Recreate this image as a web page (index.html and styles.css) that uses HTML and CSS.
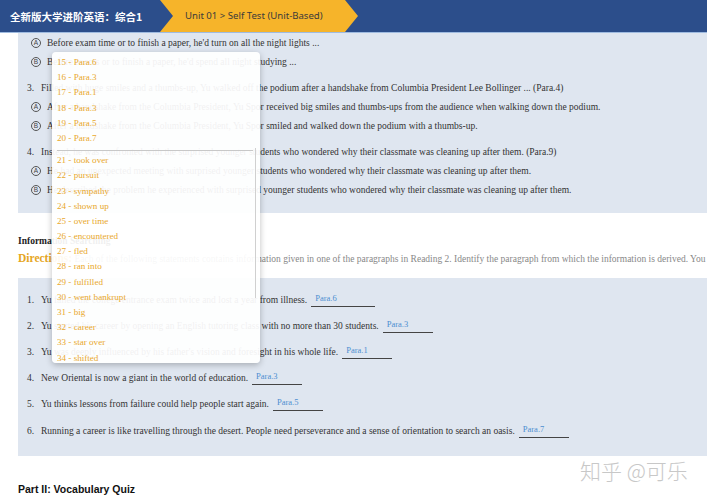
FILE: index.html
```html
<!DOCTYPE html>
<html lang="zh-CN">
<head>
    <meta charset="UTF-8">
    <meta name="viewport" content="width=device-width, initial-scale=1.0">
    <title>Self Test (Unit-Based)</title>
    <link rel="stylesheet" href="styles.css">
</head>
<body>
    <div class="topbar">
        <div class="course">全新版大学进阶英语：综合1</div>
        <div class="crumb">Unit 01 &gt; Self Test (Unit-Based)</div>
    </div>

    <div class="page">
        <!-- 阅读题 -->
        <div class="panel panel-choice">
            <div class="option"><span class="mark">A</span>Before exam time or to finish a paper, he'd turn on all the night lights ...</div>
            <div class="option"><span class="mark">B</span>Before exams or to finish a paper, he'd spend all night studying ...</div>

            <div class="question"><span class="num">3.</span>Filled with huge smiles and a thumbs-up, Yu walked off the podium after a handshake from Columbia President Lee Bollinger ... (Para.4)</div>
            <div class="option"><span class="mark">A</span>After a handshake from the Columbia President, Yu Spor received big smiles and thumbs-ups from the audience when walking down the podium.</div>
            <div class="option"><span class="mark">B</span>After a handshake from the Columbia President, Yu Spor smiled and walked down the podium with a thumbs-up.</div>

            <div class="question"><span class="num">4.</span>Instead, he was confronted with the surprised younger students who wondered why their classmate was cleaning up after them. (Para.9)</div>
            <div class="option"><span class="mark">A</span>He had an unexpected meeting with surprised younger students who wondered why their classmate was cleaning up after them.</div>
            <div class="option"><span class="mark">B</span>He described the problem he experienced with surprised younger students who wondered why their classmate was cleaning up after them.</div>
        </div>

        <div class="section-title">Information Searching</div>
        <div class="directions"><b>Directions:</b> Each of the following statements contains information given in one of the paragraphs in Reading 2. Identify the paragraph from which the information is derived. You may</div>

        <div class="panel panel-match">
            <div class="row"><span class="num">1.</span>Yu failed the college entrance exam twice and lost a year from illness. <span class="blank wide">Para.6</span></div>
            <div class="row"><span class="num">2.</span>Yu started his career by opening an English tutoring class with no more than 30 students. <span class="blank">Para.3</span></div>
            <div class="row"><span class="num">3.</span>Yu was deeply influenced by his father's vision and foresight in his whole life. <span class="blank">Para.1</span></div>
            <div class="row"><span class="num">4.</span>New Oriental is now a giant in the world of education. <span class="blank">Para.3</span></div>
            <div class="row"><span class="num">5.</span>Yu thinks lessons from failure could help people start again. <span class="blank">Para.5</span></div>
            <div class="row"><span class="num">6.</span>Running a career is like travelling through the desert. People need perseverance and a sense of orientation to search an oasis. <span class="blank">Para.7</span></div>
        </div>

        <div class="part-title">Part II: Vocabulary Quiz</div>
    </div>

    <!-- 下拉选项 -->
    <div class="dropdown">
        <ul class="group">
            <li>15 - Para.6</li>
            <li>16 - Para.3</li>
            <li>17 - Para.1</li>
            <li>18 - Para.3</li>
            <li>19 - Para.5</li>
            <li>20 - Para.7</li>
        </ul>
        <ul class="group">
            <li>21 - took over</li>
            <li>22 - pursuit</li>
            <li>23 - sympathy</li>
            <li>24 - shown up</li>
            <li>25 - over time</li>
            <li>26 - encountered</li>
            <li>27 - fled</li>
            <li>28 - ran into</li>
            <li>29 - fulfilled</li>
            <li>30 - went bankrupt</li>
            <li>31 - big</li>
            <li>32 - career</li>
            <li>33 - star over</li>
            <li>34 - shifted</li>
        </ul>
        <div class="scroll-thumb"></div>
    </div>

    <div class="watermark">知乎 @可乐</div>
</body>
</html>
```

FILE: styles.css
```css
body {
    margin: 0;
    font-family: 'Liberation Serif', serif;
    font-size: 9.5px;
    color: #333;
    background: #fff;
    overflow: hidden;
}

/* ヘッダー */
.topbar {
    display: flex;
    align-items: center;
    height: 32px;
    background: #2c4e8b;
    border-bottom: 1px solid #9fbbe0;
}

.course {
    width: 150px;
    padding-left: 10px;
    font-family: 'Noto Sans CJK SC', sans-serif;
    font-size: 10.5px;
    font-weight: bold;
    color: #fff;
}

.crumb {
    width: 198px;
    height: 32px;
    line-height: 32px;
    padding-left: 25px;
    box-sizing: border-box;
    background: #f6b42a;
    clip-path: polygon(0 0, 185px 0, 198px 16px, 185px 32px, 0 32px, 13px 16px);
    font-family: 'Noto Sans', sans-serif;
    font-size: 9.6px;
    color: #3b3b3b;
}

.page {
    padding-left: 18px;
}

.panel {
    background: #dfe6f0;
}

.panel-choice {
    padding: 0 0 13.5px 9px;
}

.option {
    display: flex;
    align-items: center;
    height: 19px;
    white-space: nowrap;
}

.mark {
    width: 8px;
    height: 8px;
    line-height: 8px;
    margin: 0 6px 0 4px;
    border: 1px solid #555;
    border-radius: 50%;
    text-align: center;
    font-family: 'Liberation Sans', sans-serif;
    font-size: 6.5px;
    color: #444;
}

.question {
    display: flex;
    align-items: center;
    height: 19px;
    margin-top: 7px;
    white-space: nowrap;
}

.num {
    width: 14px;
}

.section-title {
    margin-top: 23px;
    font-weight: bold;
    font-size: 9.5px;
    color: #222;
}

.directions {
    margin-top: 6px;
    white-space: nowrap;
    color: #888;
}

.directions b {
    font-size: 11.5px;
    color: #e6a623;
}

.panel-match {
    margin-top: 14px;
    padding: 9px 0 12px 9px;
}

.row {
    display: flex;
    align-items: center;
    height: 26.2px;
    white-space: nowrap;
}

.row .num {
    width: 14px;
}

.blank {
    display: inline-block;
    width: 46px;
    margin-left: 4px;
    padding: 0 0 3px 4px;
    border-bottom: 1px solid #444;
    font-size: 8.5px;
    color: #4d8fd1;
}

.blank.wide {
    width: 60px;
}

.part-title {
    margin-top: 27px;
    font-family: 'Liberation Sans Narrow', 'Liberation Sans', sans-serif;
    font-stretch: condensed;
    font-weight: bold;
    font-size: 10.5px;
    color: #111;
}

/* ドロップダウン */
.dropdown {
    position: absolute;
    left: 52px;
    top: 52px;
    width: 208px;
    height: 311px;
    padding: 3px 0 0 5px;
    box-sizing: border-box;
    overflow: hidden;
    background: rgba(255, 255, 255, 0.93);
    border-radius: 4px;
    box-shadow: 0 2px 6px rgba(0, 0, 0, 0.25);
}

.group {
    list-style: none;
    margin: 0;
    padding: 0;
}

.group + .group {
    margin-top: 4px;
    padding-top: 2px;
    border-top: 1px solid #c8c8c8;
    width: 196px;
}

.group li {
    height: 15.2px;
    line-height: 15.2px;
    font-size: 9.1px;
    color: #e9a82c;
}

.scroll-thumb {
    position: absolute;
    right: 4px;
    top: 96px;
    width: 1px;
    height: 150px;
    background: #d0d0d0;
}

.watermark {
    position: absolute;
    left: 580px;
    top: 455px;
    font-family: 'Noto Sans CJK SC', sans-serif;
    font-weight: 300;
    font-size: 21px;
    color: #c8c8c8;
}
```
